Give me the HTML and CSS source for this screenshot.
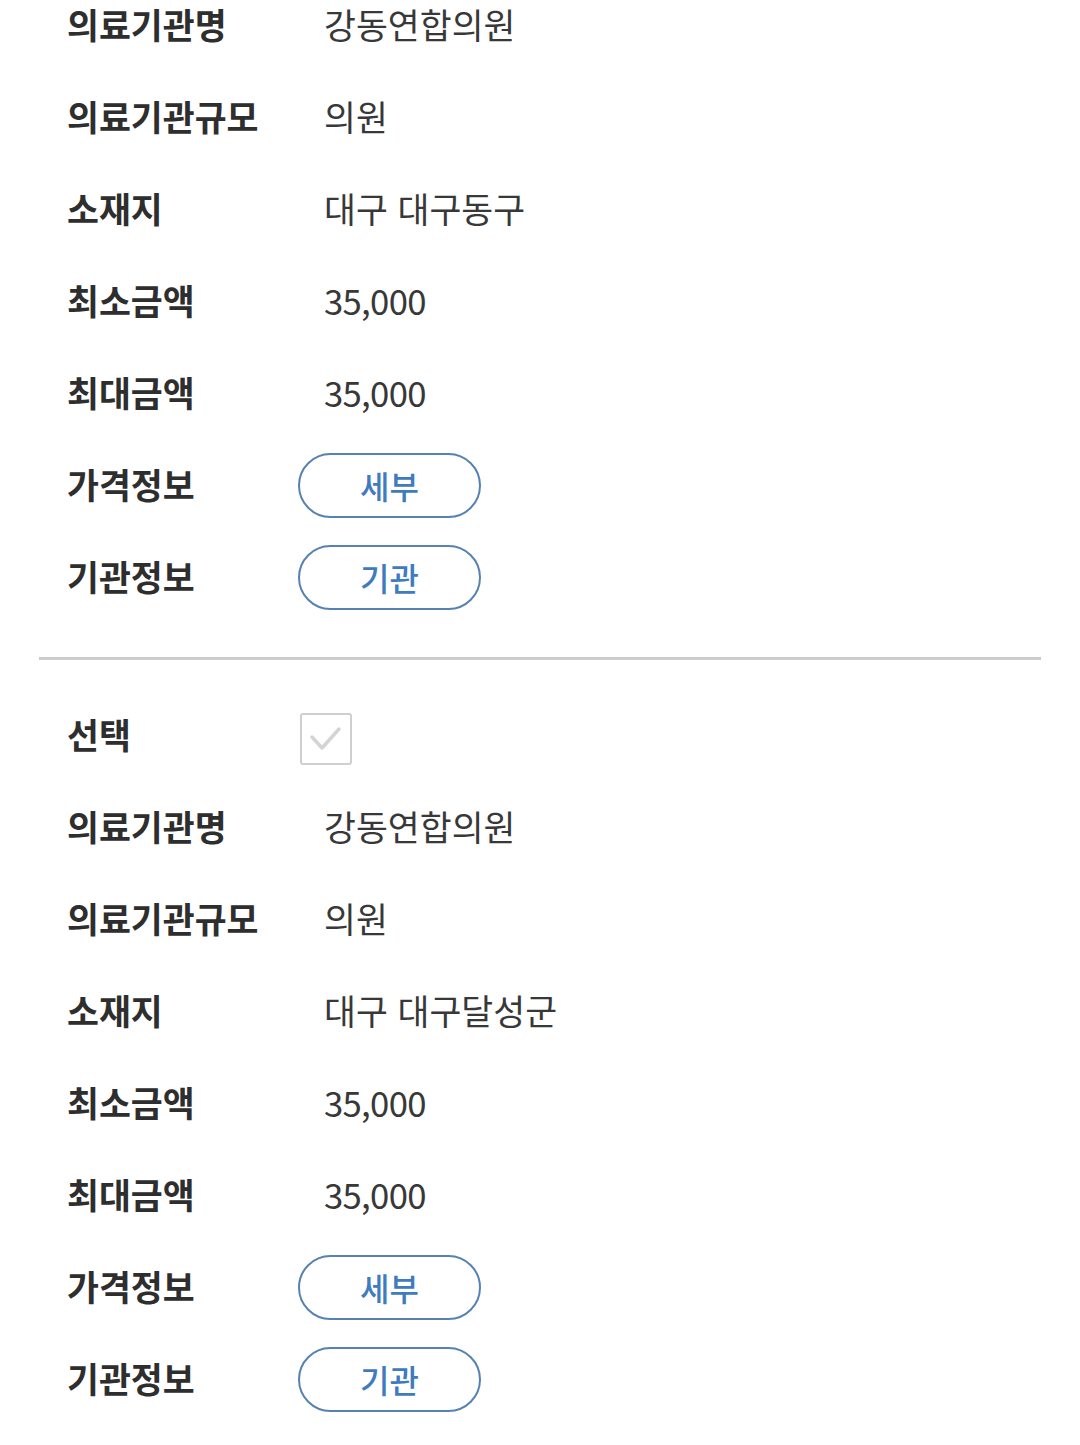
FILE: index.html
```html
<!DOCTYPE html>
<html lang="ko">

<head>
    <meta charset="UTF-8" />
    <title>의료기관 목록</title>
    <link rel="stylesheet" href="styles.css">
</head>

<body>

    <div class="page">
        <!-- 첫번째 기관 -->
        <div class="item first">
            <div class="row"><span class="label">의료기관명</span><span class="value">강동연합의원</span></div>
            <div class="row"><span class="label">의료기관규모</span><span class="value">의원</span></div>
            <div class="row"><span class="label">소재지</span><span class="value">대구 대구동구</span></div>
            <div class="row"><span class="label">최소금액</span><span class="value num">35,000</span></div>
            <div class="row"><span class="label">최대금액</span><span class="value num">35,000</span></div>
            <div class="row"><span class="label">가격정보</span><span class="value"><button class="pill">세부</button></span></div>
            <div class="row"><span class="label">기관정보</span><span class="value"><button class="pill">기관</button></span></div>
        </div>

        <hr class="divider">

        <!-- 두번째 기관 -->
        <div class="item">
            <div class="row">
                <span class="label">선택</span>
                <span class="value">
                    <span class="check">
                        <svg width="48" height="48" viewBox="0 0 48 48">
                            <path d="M10 22 L20 33 L37 14" fill="none" stroke="#d4d4d4" stroke-width="3.5" stroke-linecap="round" stroke-linejoin="round" />
                        </svg>
                    </span>
                </span>
            </div>
            <div class="row"><span class="label">의료기관명</span><span class="value">강동연합의원</span></div>
            <div class="row"><span class="label">의료기관규모</span><span class="value">의원</span></div>
            <div class="row"><span class="label">소재지</span><span class="value">대구 대구달성군</span></div>
            <div class="row"><span class="label">최소금액</span><span class="value num">35,000</span></div>
            <div class="row"><span class="label">최대금액</span><span class="value num">35,000</span></div>
            <div class="row"><span class="label">가격정보</span><span class="value"><button class="pill">세부</button></span></div>
            <div class="row"><span class="label">기관정보</span><span class="value"><button class="pill">기관</button></span></div>
        </div>
    </div>

</body>

</html>
```

FILE: styles.css
```css
body {
    margin: 0;
    background: #fff;
    font-family: "Noto Sans CJK KR", "Noto Sans", sans-serif;
    color: #333;
}

.page {
    margin-top: -21px;
    padding: 0 39px;
}

.item {
    padding: 0 28px;
}

.item.first {
    padding-bottom: 34px;
}

.row {
    display: grid;
    grid-template-columns: 257px 1fr;
    align-items: center;
    height: 92px;
}

.label {
    font-size: 34.7px;
    font-weight: 700;
    color: #2e2e2e;
    line-height: 1.2;
}

.value {
    font-size: 34.7px;
    color: #383838;
    line-height: 1.2;
    display: flex;
    align-items: center;
}

.value.num {
    letter-spacing: -0.7px;
}

/* 구분선 */
.divider {
    border: none;
    height: 3px;
    background: #cccccc;
    margin: 0 0 29px 0;
}

/* 버튼 */
.pill {
    width: 183px;
    height: 65px;
    margin-left: -26px;
    border: 2px solid #5581b3;
    border-radius: 33px;
    background: #fff;
    color: #3f7bbf;
    font-family: inherit;
    font-size: 32px;
    font-weight: 500;
    padding: 0;
    cursor: pointer;
}

/* 체크박스 */
.check {
    width: 48px;
    height: 48px;
    margin-left: -24px;
    margin-top: 8px;
    border: 2px solid #cfcfcf;
    border-radius: 3px;
    display: flex;
    align-items: center;
    justify-content: center;
}
```
